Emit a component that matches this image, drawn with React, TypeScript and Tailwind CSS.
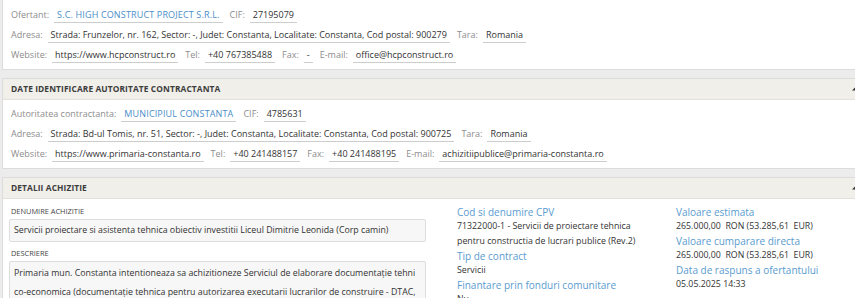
import React from 'react'

function Lbl({ children }: { children: React.ReactNode }) {
  return <span className="text-[#8d8d8d] mr-[5px]">{children}</span>
}

function Val({ children, blue }: { children: React.ReactNode; blue?: boolean }) {
  return (
    <span
      className={`px-[3px] mr-[7px] leading-[14px] border-b border-[#cdcdcd] ${
        blue ? 'text-[#4b8ec8] tracking-[0.15px]' : 'text-[#333333]'
      }`}
    >
      {children}
    </span>
  )
}

function Row({ children }: { children: React.ReactNode }) {
  return <div className="flex items-center h-[20px] whitespace-nowrap">{children}</div>
}

function Header({ title }: { title: string }) {
  return (
    <div className="flex items-center justify-between h-[21px] pl-[8px] bg-[#f0efea] border-b border-[#e2e1dc]">
      <span className="text-[8.4px] font-bold text-[#3d3d3d] tracking-[0.1px]">{title}</span>
      <svg width="6" height="6" viewBox="0 0 6 6" className="mr-[-3px]">
        <path d="M0 4.5 L3 1.5 L6 4.5 Z" fill="#333" />
      </svg>
    </div>
  )
}

function Info({ title, lines }: { title: string; lines: string[] }) {
  return (
    <div>
      <div className="text-[10px] leading-[14px] text-[#5a9bcf]">{title}</div>
      {lines.map((l) => (
        <div key={l} className="text-[8.8px] leading-[15px] text-[#333333] whitespace-pre">
          {l}
        </div>
      ))}
    </div>
  )
}

export default function App() {
  return (
    <div className="w-[855px] h-[298px] overflow-hidden bg-[#ececec] pl-[2px] font-['Open_Sans',sans-serif] text-[9px]">
      {/* ofertant */}
      <div className="bg-white border border-t-0 border-r-0 border-[#dcdcdc] pt-[5px] pb-[4px] pl-[8px]">
        <Row>
          <Lbl>Ofertant:</Lbl>
          <Val blue>S.C. HIGH CONSTRUCT PROJECT S.R.L.</Val>
          <Lbl>CIF:</Lbl>
          <Val>27195079</Val>
        </Row>
        <Row>
          <Lbl>Adresa:</Lbl>
          <Val>Strada: Frunzelor, nr. 162, Sector: -, Judet: Constanta, Localitate: Constanta, Cod postal: 900279</Val>
          <Lbl>Tara:</Lbl>
          <Val>Romania</Val>
        </Row>
        <Row>
          <Lbl>Website:</Lbl>
          <Val>https://www.hcpconstruct.ro</Val>
          <Lbl>Tel:</Lbl>
          <Val>+40 767385488</Val>
          <Lbl>Fax:</Lbl>
          <Val>-</Val>
          <Lbl>E-mail:</Lbl>
          <Val>office@hcpconstruct.ro</Val>
        </Row>
      </div>

      {/* autoritate */}
      <div className="mt-[8px] bg-white border border-r-0 border-[#dcdcdc]">
        <Header title="DATE IDENTIFICARE AUTORITATE CONTRACTANTA" />
        <div className="pt-[4px] pb-[4px] pl-[8px]">
          <Row>
            <Lbl>Autoritatea contractanta:</Lbl>
            <Val blue>MUNICIPIUL CONSTANTA</Val>
            <Lbl>CIF:</Lbl>
            <Val>4785631</Val>
          </Row>
          <Row>
            <Lbl>Adresa:</Lbl>
            <Val>Strada: Bd-ul Tomis, nr. 51, Sector: -, Judet: Constanta, Localitate: Constanta, Cod postal: 900725</Val>
            <Lbl>Tara:</Lbl>
            <Val>Romania</Val>
          </Row>
          <Row>
            <Lbl>Website:</Lbl>
            <Val>https://www.primaria-constanta.ro</Val>
            <Lbl>Tel:</Lbl>
            <Val>+40 241488157</Val>
            <Lbl>Fax:</Lbl>
            <Val>+40 241488195</Val>
            <Lbl>E-mail:</Lbl>
            <Val>achizitiipublice@primaria-constanta.ro</Val>
          </Row>
        </div>
      </div>

      {/* detalii */}
      <div className="mt-[8px] bg-white border border-r-0 border-b-0 border-[#dcdcdc]">
        <Header title="DETALII ACHIZITIE" />
        <div className="grid grid-cols-[417px_188px_1fr] gap-x-[31px] pt-[6px] pl-[6px]">
          <div className="text-[8.8px]">
            <div className="text-[7.4px] leading-[10px] text-[#444] mt-[1px] mb-[3px] pl-[2px]">DENUMIRE ACHIZITIE</div>
            <div className="bg-[#f7f7f7] border border-[#dddddd] rounded-[2px] px-[4px] py-[4px] leading-[13px] text-[#333] whitespace-nowrap">
              Servicii proiectare si asistenta tehnica obiectiv investitii Liceul Dimitrie Leonida (Corp camin)
            </div>
            <div className="text-[7.4px] leading-[10px] text-[#444] mt-[6px] mb-[3px] pl-[2px]">DESCRIERE</div>
            <div className="bg-[#f7f7f7] border border-[#dddddd] rounded-[2px] px-[4px] pt-[2px] h-[60px] leading-[18.5px] text-[#333] whitespace-nowrap">
              <div>Primaria mun. Constanta intentioneaza sa achizitioneze Serviciul de elaborare documentație tehni</div>
              <div>co-economica (documentație tehnica pentru autorizarea executarii lucrarilor de construire - DTAC,</div>
            </div>
          </div>
          <div>
            <Info
              title="Cod si denumire CPV"
              lines={['71322000-1 - Servicii de proiectare tehnica', 'pentru constructia de lucrari publice (Rev.2)']}
            />
            <Info title="Tip de contract" lines={['Servicii']} />
            <Info title="Finantare prin fonduri comunitare" lines={['Nu']} />
          </div>
          <div>
            <Info title="Valoare estimata" lines={['265.000,00  RON (53.285,61  EUR)']} />
            <Info title="Valoare cumparare directa" lines={['265.000,00  RON (53.285,61  EUR)']} />
            <Info title="Data de raspuns a ofertantului" lines={['05.05.2025 14:33']} />
          </div>
        </div>
      </div>
    </div>
  )
}
